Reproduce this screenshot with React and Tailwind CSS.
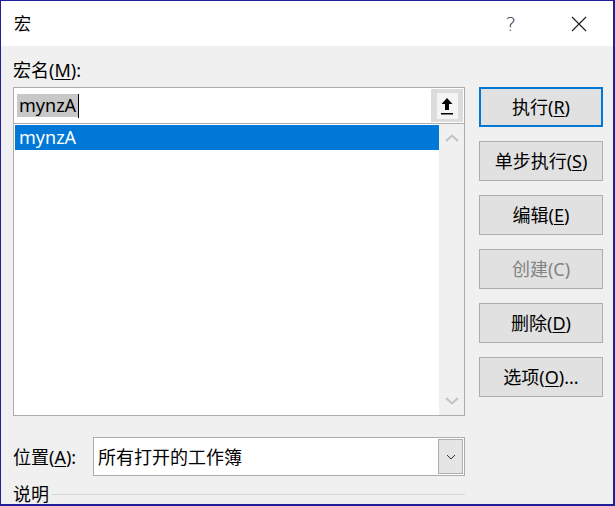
import React from "react";

const font = { fontFamily: '"Segoe UI", "Noto Sans", "Noto Sans CJK SC", sans-serif' };

function Btn({ children, primary, disabled }) {
  return (
    <div
      className={
        "h-[40px] w-[124px] flex items-center justify-center bg-[#e1e1e1] text-[18px] leading-none " +
        (primary ? "border-2 border-[#0078d7] " : "border border-[#adadad] ") +
        (disabled ? "text-[#838383]" : "text-[#000]")
      }
    >
      {children}
    </div>
  );
}

export default function App() {
  return (
    <div
      className="w-[615px] h-[506px] flex flex-col border-t border-l border-r-2 border-b-2 border-[#1f1f9e] bg-[#f0f0f0] overflow-hidden"
      style={font}
    >
      {/* title bar */}
      <div className="h-[45px] bg-white flex items-center pl-[13px] shrink-0">
        <span className="text-[17px] text-black leading-none">宏</span>
        <div className="flex-1" />
        <span
          className="text-[20px] text-[#333] leading-none mr-[55px]"
          style={{ fontFamily: '"DejaVu Sans", sans-serif', fontWeight: 200 }}
        >
          ?
        </span>
        <svg width="16" height="16" viewBox="0 0 16 16" className="mr-[26px]">
          <path d="M1 1 L15 15 M15 1 L1 15" stroke="#222" strokeWidth="1.2" />
        </svg>
      </div>

      {/* body */}
      <div className="flex flex-1 pl-[12px]">
        <div className="w-[452px] flex flex-col">
          <div className="h-[41px] flex items-end pb-[8px] text-[18px] leading-none text-black">
            宏名(<span className="underline underline-offset-2">M</span>):
          </div>
          {/* input */}
          <div className="h-[37px] border border-[#adadad] bg-white flex items-center">
            <div className="ml-[3px] flex items-center h-[23px]">
              <span className="bg-[#c8c8c8] text-[18px] leading-[23px] px-[2px] text-black">mynzA</span>
              <span className="w-[1px] h-[24px] bg-black" />
            </div>
            <div className="flex-1" />
            <div className="h-[33px] w-[32px] bg-[#dcdcdc] flex items-center justify-center mr-[1px]">
              <div className="w-[21px] h-[26px] bg-[#f4f4f4] flex items-center justify-center">
                <svg width="14" height="20" viewBox="0 0 14 20">
                  <path d="M7 2 L12.5 8 L9 8 L9 14 L5 14 L5 8 L1.5 8 Z" fill="#000" />
                  <rect x="1" y="17" width="12" height="1.5" fill="#000" />
                </svg>
              </div>
            </div>
          </div>
          {/* list */}
          <div className="h-[292px] border border-[#adadad] border-t-0 bg-white flex">
            <div className="flex-1 pl-[1px] pt-[1px]">
              <div className="h-[25px] bg-[#0078d7] text-white text-[18px] leading-[25px] pl-[4px]">mynzA</div>
            </div>
            <div className="w-[25px] bg-[#f0f0f0] flex flex-col items-center justify-between py-[10px]">
              <svg width="14" height="8" viewBox="0 0 14 8">
                <path d="M1 7 L7 1.5 L13 7" fill="none" stroke="#c2c2c2" strokeWidth="2" />
              </svg>
              <svg width="14" height="8" viewBox="0 0 14 8">
                <path d="M1 1 L7 6.5 L13 1" fill="none" stroke="#c2c2c2" strokeWidth="2" />
              </svg>
            </div>
          </div>
          {/* location */}
          <div className="mt-[21px] h-[39px] flex items-center">
            <div className="w-[80px] text-[18px] leading-none text-black">
              位置(<span className="underline underline-offset-2">A</span>):
            </div>
            <div className="flex-1 h-[39px] border border-[#adadad] bg-white flex items-center">
              <span className="ml-[4px] text-[18px] leading-none text-black">所有打开的工作簿</span>
              <div className="flex-1" />
              <div className="w-[25px] h-[35px] bg-[#e5e5e5] border border-[#adadad] mr-[1px] flex items-center justify-center">
                <svg width="10" height="6" viewBox="0 0 10 6">
                  <path d="M1 1 L5 5 L9 1" fill="none" stroke="#333" strokeWidth="1" />
                </svg>
              </div>
            </div>
          </div>
          {/* description */}
          <div className="mt-[7px] flex items-center">
            <span className="text-[18px] leading-[22px] text-black">说明</span>
            <div className="flex-1 h-[1px] bg-[#d7d7d7] ml-[2px]" />
          </div>
        </div>

        <div className="ml-[14px] pt-[41px] flex flex-col gap-[14px]">
          <Btn primary>
            执行(<span className="underline underline-offset-2">R</span>)
          </Btn>
          <Btn>
            单步执行(<span className="underline underline-offset-2">S</span>)
          </Btn>
          <Btn>
            编辑(<span className="underline underline-offset-2">E</span>)
          </Btn>
          <Btn disabled>创建(C)</Btn>
          <Btn>
            删除(<span className="underline underline-offset-2">D</span>)
          </Btn>
          <Btn>
            选项(<span className="underline underline-offset-2">O</span>)...
          </Btn>
        </div>
      </div>
    </div>
  );
}
